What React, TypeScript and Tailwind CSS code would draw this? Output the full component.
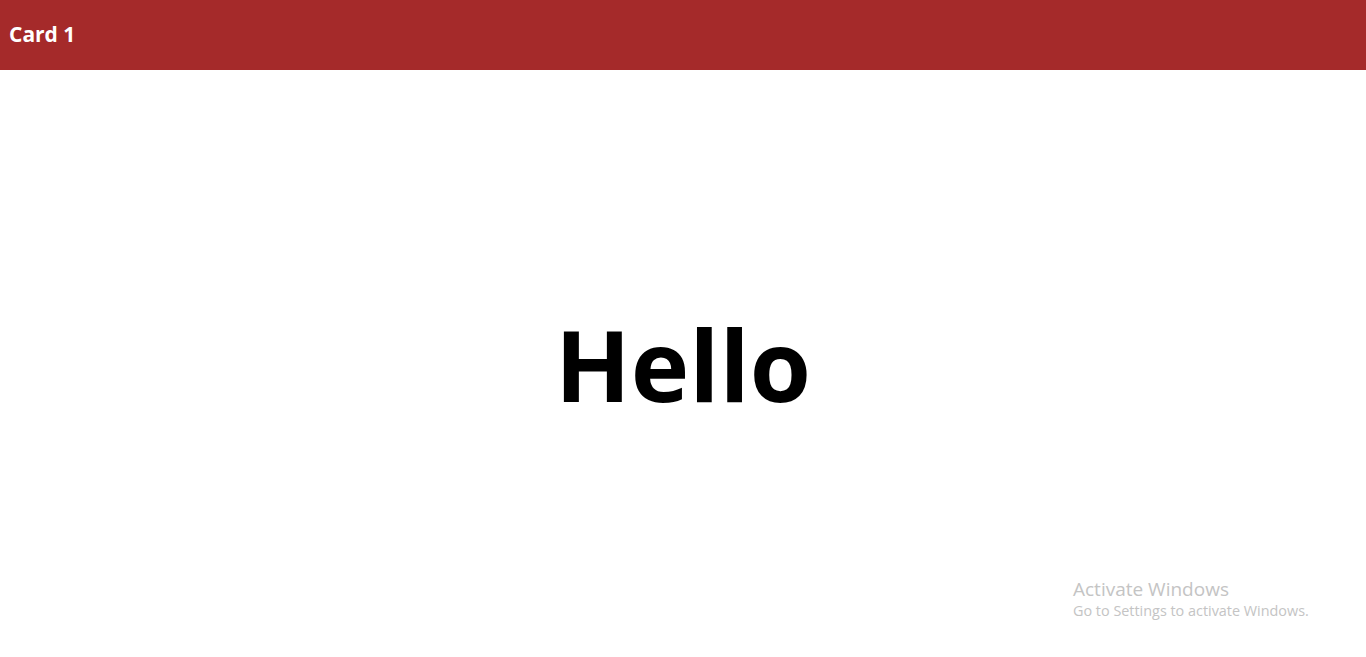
export default function App() {
  return (
    <div className="relative flex h-screen flex-col bg-white" style={{ fontFamily: '"Open Sans", "Noto Sans", sans-serif' }}>
      <header className="flex h-[70px] shrink-0 items-center bg-[#a52a2a] px-[9px]">
        <h1 className="text-[21px] font-bold text-white">Card 1</h1>
      </header>

      <main className="flex flex-1 items-center justify-center">
        <h2 className="text-[99px] leading-none font-bold text-black">Hello</h2>
      </main>

      {/* windows watermark */}
      <div className="pointer-events-none absolute bottom-[36px] left-[1073px] text-[#c4c4c4]">
        <p className="text-[19px] leading-[24px]">Activate Windows</p>
        <p className="text-[14.4px] leading-[20px]">Go to Settings to activate Windows.</p>
      </div>
    </div>
  );
}
